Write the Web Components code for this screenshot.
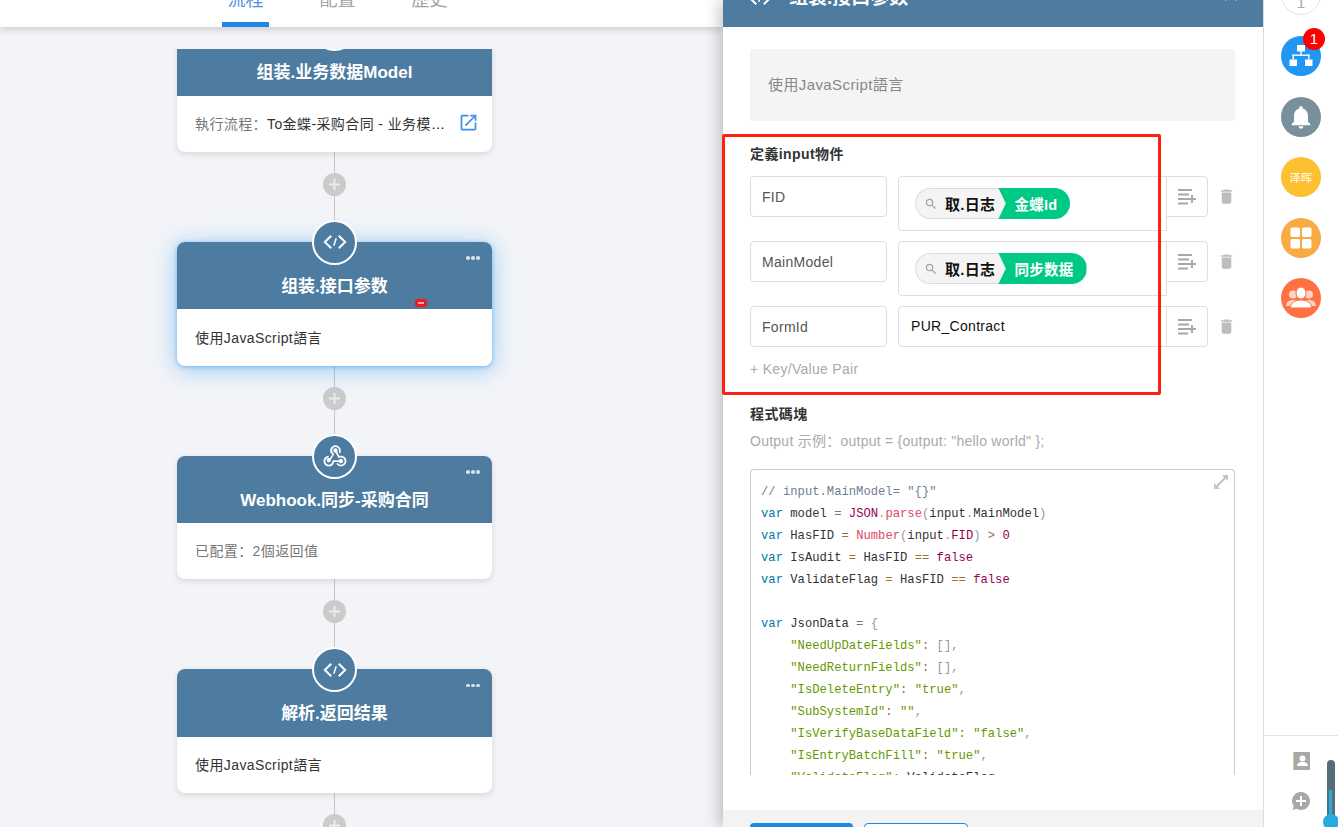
<!DOCTYPE html>
<html lang="zh">
<head>
<meta charset="utf-8">
<title>组装.接口参数</title>
<style>
html,body{margin:0;padding:0;height:827px;overflow:hidden;background:#f3f4f8;font-family:"Liberation Sans","Noto Sans CJK SC",sans-serif}
</style>
</head>
<body>
<x-app>
  <x-topbar slot="top"></x-topbar>
  <x-flow slot="flow">
    <x-flow-card first title-text="组装.业务数据Model" icon="code">
      <span style="color:#777">執行流程&#xFF1A;</span><span style="color:#333">To金蝶-采购合同 - 业务模型数据组装</span>
      <svg slot="action" width="21" height="21" viewBox="0 0 24 24" fill="#3f8fe8"><path d="M19 19H5V5h7V3H5c-1.11 0-2 .9-2 2v14c0 1.1.89 2 2 2h14c1.1 0 2-.9 2-2v-7h-2v7zM14 3v2h3.59l-9.83 9.83 1.41 1.41L19 6.41V10h2V3h-7z"/></svg>
    </x-flow-card>
    <x-connector></x-connector>
    <x-flow-card selected title-text="组装.接口参数" icon="code"><span style="color:#333">使用JavaScript語言</span></x-flow-card>
    <x-connector></x-connector>
    <x-flow-card title-text="Webhook.同步-采购合同" icon="webhook"><span style="color:#777">已配置&#xFF1A;2個返回值</span></x-flow-card>
    <x-connector></x-connector>
    <x-flow-card title-text="解析.返回结果" icon="code"><span style="color:#333">使用JavaScript語言</span></x-flow-card>
    <x-connector></x-connector>
  </x-flow>
  <x-panel slot="panel">
    <x-kv-row key-name="FID"><x-ref-pill source="取.日志" field="金蝶Id"></x-ref-pill></x-kv-row>
    <x-kv-row key-name="MainModel"><x-ref-pill source="取.日志" field="同步数据"></x-ref-pill></x-kv-row>
    <x-kv-row key-name="FormId" plain>PUR_Contract</x-kv-row>
  </x-panel>
  <x-sidebar slot="side"></x-sidebar>
</x-app>

<script>
const CODE_SVG = '<svg width="24" height="24" viewBox="0 0 24 24" fill="none" stroke="#fff" stroke-width="2" stroke-linecap="square"><path d="M7.500 6.500 1.800 12 7.500 17.500M16.500 6.500 22.200 12 16.500 17.500"/><path d="M13 9 11 15" stroke-width="1.500"/></svg>';
const HOOK_SVG = '<svg width="28" height="28" viewBox="0 0 24 24" fill="#fff"><path d="M10.460,19C9,21.070 6.150,21.590 4.090,20.150C2.040,18.710 1.560,15.840 3,13.750C3.870,12.500 5.210,11.830 6.580,11.770L6.630,13.200C5.720,13.270 4.840,13.740 4.270,14.560C3.270,16 3.580,17.940 4.950,18.910C6.330,19.870 8.260,19.500 9.260,18.070C9.570,17.620 9.750,17.130 9.820,16.630V15.620L15.400,15.580L15.470,15.470C16,14.550 17.150,14.230 18.050,14.750C18.950,15.270 19.260,16.430 18.730,17.350C18.200,18.260 17.040,18.580 16.140,18.060C15.730,17.830 15.440,17.460 15.310,17.040L11.240,17.060C11.130,17.730 10.870,18.380 10.460,19M17.740,11.860C20.270,12.170 22.070,14.440 21.760,16.930C21.450,19.430 19.150,21.200 16.620,20.890C15.130,20.710 13.900,19.860 13.190,18.680L14.430,17.960C14.920,18.730 15.750,19.280 16.750,19.410C18.500,19.620 20.050,18.430 20.260,16.760C20.470,15.090 19.230,13.560 17.500,13.350C16.960,13.290 16.440,13.360 15.970,13.530L15.120,13.970L12.540,9.200H12.320C11.260,9.170 10.440,8.290 10.470,7.250C10.500,6.210 11.400,5.400 12.450,5.440C13.500,5.500 14.330,6.370 14.300,7.410C14.280,7.850 14.110,8.250 13.840,8.560L15.730,12.050C16.350,11.850 17.030,11.780 17.740,11.860M8.250,9.140C7.250,6.790 8.310,4.100 10.620,3.120C12.940,2.140 15.620,3.250 16.620,5.600C17.200,6.970 17.070,8.470 16.420,9.670L15.180,8.950C15.590,8.140 15.670,7.150 15.280,6.220C14.620,4.650 12.840,3.900 11.310,4.550C9.780,5.200 9.080,7 9.740,8.560C10,9.200 10.500,9.700 11.030,10L11.420,10.230L8.360,15.250C8.390,15.300 8.430,15.400 8.460,15.500C8.530,16.500 7.780,17.380 6.750,17.440C5.730,17.500 4.840,16.720 4.790,15.680C4.730,14.640 5.500,13.740 6.540,13.680C6.970,13.660 7.380,13.780 7.710,14L9.850,10.500C9.180,10.200 8.580,9.700 8.250,9.140Z"/></svg>';

function shadow(el, html){ el.attachShadow({mode:'open'}).innerHTML = html; }

customElements.define('x-app', class extends HTMLElement{
  constructor(){ super(); shadow(this, `<style>
    :host{display:flex;width:1338px;height:827px;overflow:hidden;background:#f3f4f8}
    .left{width:723px;flex:none;display:flex;flex-direction:column;position:relative}
    ::slotted([slot=top]){position:relative;z-index:1}
    .panelwrap{position:relative;z-index:2;flex:none}
    .sidewrap{position:relative;z-index:3;flex:none}
  </style>
  <div class="left"><slot name="top"></slot><slot name="flow"></slot></div>
  <div class="panelwrap"><slot name="panel"></slot></div>
  <div class="sidewrap"><slot name="side"></slot></div>`); }
});

customElements.define('x-topbar', class extends HTMLElement{
  constructor(){ super(); shadow(this, `<style>
    :host{display:block;height:27px;width:100%;background:#fff;box-shadow:0 2px 8px rgba(0,0,0,.18);overflow:hidden}
    .tabs{display:flex;gap:45px;margin:-33px 0 0 222px;height:60px}
    .t{width:47px;height:60px;box-sizing:border-box;text-align:center;font-size:18px;line-height:26px;padding-top:20px;color:#a3a3a3}
    .a{color:#4a90e2;border-bottom:5px solid #1e88e5}
  </style>
  <div class="tabs"><div class="t a">流程</div><div class="t">配置</div><div class="t">歷史</div></div>`); }
});

customElements.define('x-flow', class extends HTMLElement{
  constructor(){ super(); shadow(this, `<style>
    :host{display:block;margin-top:22px;flex:1;min-height:0;overflow:hidden;padding-left:177px;padding-right:16px}
    .col{width:315px;display:flex;flex-direction:column;margin-top:-20.6px}
  </style><div class="col"><slot></slot></div>`); }
});

customElements.define('x-flow-card', class extends HTMLElement{
  constructor(){ super(); shadow(this, `<style>
    :host{display:block;position:relative;width:315px;height:123.7px;flex:none;border-radius:8px;background:#fff;box-shadow:0 2px 6px rgba(0,0,0,.12)}
    :host([selected]){box-shadow:0 1px 4px rgba(33,150,243,.5),0 3px 22px 2px rgba(33,150,243,.38)}
    .h{height:67.4px;box-sizing:border-box;padding-top:33px;background:#4d7ca0;border-radius:8px 8px 0 0;text-align:center;color:#fff;font-weight:700;font-size:17px;line-height:24px}
    .ic{position:absolute;left:135px;top:-22px;width:45px;height:45px;box-sizing:border-box;border:2px solid #fff;border-radius:50%;background:#4d7ca0;display:flex;align-items:center;justify-content:center}
    .dots{position:absolute;right:12px;top:14.500px;display:flex;gap:1.600px}
    .dots i{width:3.600px;height:3.600px;border-radius:50%;background:#d5e2ec}
    .b{height:56.3px;box-sizing:border-box;padding:0 13.500px 2px 18px;display:flex;align-items:center;gap:9px;font-size:14px;letter-spacing:.4px}
    .txt{flex:1;min-width:0;white-space:nowrap;overflow:hidden;text-overflow:ellipsis}
    .mark{position:absolute;left:238px;top:57.100px;width:12px;height:8px;box-sizing:border-box;border:3px solid #f01818;border-radius:3px;background:#ffb0b0}
    ::slotted(svg){display:block;flex:none}
  </style>
  <div class="h"></div><div class="ic"></div><div class="dots"><i></i><i></i><i></i></div>
  <div class="b"><div class="txt"><slot></slot></div><slot name="action"></slot></div>`); }
  connectedCallback(){
    const r=this.shadowRoot;
    r.querySelector('.h').textContent=this.getAttribute('title-text');
    r.querySelector('.ic').innerHTML=this.getAttribute('icon')==='webhook'?HOOK_SVG:CODE_SVG;
    if(this.hasAttribute('selected')&&!r.querySelector('.mark')){const m=document.createElement('div');m.className='mark';r.appendChild(m);}
  }
});

customElements.define('x-connector', class extends HTMLElement{
  constructor(){ super(); shadow(this, `<style>
    :host{display:flex;flex-direction:column;align-items:center;height:89.9px;flex:none;width:315px}
    .l{width:1px;background:#c6c6c8}
    .p{width:23px;height:23px;flex:none;border-radius:50%;background:#cbcbcb;display:flex;align-items:center;justify-content:center}
  </style><div class="l" style="height:21px"></div>
  <div class="p"><svg width="13" height="13" viewBox="0 0 13 13"><path d="M5.500 1h2v4.500H12v2H7.500V12h-2V7.500H1v-2h4.500z" fill="#ececec"/></svg></div>
  <div class="l" style="height:45.9px"></div>`); }
});

customElements.define('x-ref-pill', class extends HTMLElement{
  constructor(){ super(); shadow(this, `<style>
    :host{display:inline-flex;height:31px;vertical-align:top}
    .s{display:flex;align-items:center;box-sizing:border-box;height:31px;padding:0 11px 0 8px;gap:7px;background:#f4f4f4;border:1px solid #ddd;border-right:0;border-radius:16px 0 0 16px;font-size:15px;font-weight:700;color:#111}
    .f{display:flex;align-items:center;height:31px;box-sizing:border-box;margin-left:-8px;padding:0 13px 0 16px;background:#00c985;color:#fff;font-size:14.500px;font-weight:700;border-radius:0 16px 16px 0;clip-path:polygon(0 0,100% 0,100% 100%,0 100%,7.500px 50%)}
    svg{display:block;flex:none}
  </style>
  <div class="s"><svg width="14" height="14" viewBox="0 0 24 24" fill="#a0a0a0"><path d="M15.500 14h-.79l-.28-.27C15.410 12.590 16 11.110 16 9.500 16 5.910 13.090 3 9.500 3S3 5.910 3 9.500 5.910 16 9.500 16c1.610 0 3.090-.59 4.230-1.570l.27.28v.79l5 4.990L20.490 19l-4.990-5zm-6 0C7.010 14 5 11.990 5 9.500S7.010 5 9.500 5 14 7.010 14 9.500 11.990 14 9.500 14z"/></svg><span class="src"></span></div>
  <div class="f"></div>`); }
  connectedCallback(){
    this.shadowRoot.querySelector('.src').textContent=this.getAttribute('source');
    this.shadowRoot.querySelector('.f').textContent=this.getAttribute('field');
  }
});

customElements.define('x-kv-row', class extends HTMLElement{
  constructor(){ super(); shadow(this, `<style>
    :host{display:flex;align-items:flex-start;font-size:14px;letter-spacing:.3px}
    .k{width:137px;height:41px;box-sizing:border-box;border:1px solid #dedede;border-radius:4px;padding:1px 11px 0;line-height:39px;color:#555;flex:none}
    .v{width:269px;margin-left:11px;box-sizing:border-box;border:1px solid #dedede;border-radius:4px 0 0 4px;padding:11px 16px;flex:none;min-height:41px;font-size:0}
    :host([plain]) .v{height:41px;padding:0 12px;line-height:38px;font-size:14px;color:#111}
    .add{width:42px;height:41px;margin-left:-1px;box-sizing:border-box;border:1px solid #dedede;border-radius:0 4px 4px 0;display:flex;align-items:center;justify-content:center;flex:none;background:#fff}
    .del{width:19px;height:41px;margin-left:9px;display:flex;align-items:center;justify-content:center;flex:none}
  </style>
  <div class="k"></div><div class="v"><slot></slot></div>
  <div class="add"><svg width="18" height="16" viewBox="0 0 18 16" fill="#a8a8a8"><rect width="14" height="2" y="0"/><rect width="11" height="2" y="4.500"/><rect width="10" height="2" y="9"/><rect width="10" height="2" y="13.500"/><path d="M13 6h2v3H18v2h-3v3H13v-3H10V9h3z"/></svg></div>
  <div class="del"><svg width="19" height="19" viewBox="0 0 24 24" fill="#bdbdbd"><path d="M6 19c0 1.100.9 2 2 2h8c1.100 0 2-.9 2-2V7H6v12zM19 4h-3.500l-1-1h-5l-1 1H5v2h14V4z"/></svg></div>`); }
  connectedCallback(){ this.shadowRoot.querySelector('.k').textContent=this.getAttribute('key-name'); }
});

customElements.define('x-code-block', class extends HTMLElement{
  constructor(){ super();
    const S=s=>`<i class="s">${s}</i>`, O=s=>`<i class="o">${s}</i>`, K=s=>`<i class="k">${s}</i>`, P=s=>`<i class="p">${s}</i>`, B=s=>`<i class="b">${s}</i>`, F=s=>`<i class="f">${s}</i>`;
    const lines=[
      `<i class="c">// input.MainModel= "{}"</i>`,
      `${K('var')} model ${O('=')} ${B('JSON')}${P('.')}${F('parse')}${P('(')}input${P('.')}MainModel${P(')')}`,
      `${K('var')} HasFID ${O('=')} ${F('Number')}${P('(')}input${P('.')}${B('FID')}${P(')')} ${O('&gt;')} ${B('0')}`,
      `${K('var')} IsAudit ${O('=')} HasFID ${O('==')} ${B('false')}`,
      `${K('var')} ValidateFlag ${O('=')} HasFID ${O('==')} ${B('false')}`,
      ``,
      `${K('var')} JsonData ${O('=')} ${P('{')}`,
      `    ${S('"NeedUpDateFields"')}${O(':')} ${P('[],')}`,
      `    ${S('"NeedReturnFields"')}${O(':')} ${P('[],')}`,
      `    ${S('"IsDeleteEntry"')}${O(':')} ${S('"true"')}${P(',')}`,
      `    ${S('"SubSystemId"')}${O(':')} ${S('""')}${P(',')}`,
      `    ${S('"IsVerifyBaseDataField"')}${O(':')} ${S('"false"')}${P(',')}`,
      `    ${S('"IsEntryBatchFill"')}${O(':')} ${S('"true"')}${P(',')}`,
      `    ${S('"ValidateFlag"')}${O(':')} ValidateFlag${P(',')}`
    ];
    shadow(this, `<style>
      :host{display:block;position:relative;height:306px;box-sizing:border-box;border:1px solid #ccc;border-bottom:0;border-radius:4px 4px 0 0;overflow:hidden;padding:11px 10px 0}
      pre{margin:0;font-family:"Liberation Mono",monospace;font-size:12.200px;line-height:22px;color:#333}
      i{font-style:normal}
      .c{color:#708090}.k{color:#07a}.o{color:#9a6e3a}.p{color:#999}.b{color:#905}.f{color:#dd4a68}.s{color:#690}
      svg{position:absolute;right:6px;top:5px}
    </style>
    <pre>${lines.join('\n')}</pre>
    <svg width="14" height="14" viewBox="0 0 14 14" fill="#c4c4c4"><path d="M8 0h6v6l-2.200-2.200L3.800 11.800 6 14H0V8l2.200 2.200 8-8z"/></svg>`); }
});

customElements.define('x-panel', class extends HTMLElement{
  constructor(){ super(); shadow(this, `<style>
    :host{display:flex;flex-direction:column;width:540px;height:827px;background:#fff;box-shadow:-4px 0 14px rgba(0,0,0,.22);position:relative}
    .head{height:27px;flex:none;background:#4d7ca0;overflow:hidden;position:relative;color:#fff}
    .head .in{position:absolute;left:25px;right:25px;bottom:17px;height:24px;display:flex;align-items:center;font-size:19px;font-weight:700;line-height:24px;white-space:nowrap}
    .head .in span{margin-left:17px}
    .head .x{margin-left:auto;display:block;transform:translateY(-4px)}
    .main{flex:1;min-height:0;padding:22px 28px 0 27px;overflow:hidden}
    .desc{height:72px;box-sizing:border-box;background:#f4f4f4;border-radius:3px;padding:0 18px;font-size:15px;line-height:72px;color:#888;letter-spacing:.4px}
    .lab{font-size:14px;font-weight:700;line-height:20px;color:#333;letter-spacing:.4px}
    .rows{display:flex;flex-direction:column;gap:10px;margin-top:12px}
    .more{margin-top:12px;font-size:14px;line-height:20px;color:#aaa;letter-spacing:.3px}
    .hint{margin-top:7px;font-size:14px;line-height:20px;color:#aaa;letter-spacing:.25px}
    x-code-block{margin-top:18px}
    .foot{height:17px;flex:none;background:#f3f3f3;padding:13px 28px 0 27px;box-sizing:border-box;display:flex;gap:11px;overflow:hidden}
    .btn{width:103px;height:36px;flex:none;border-radius:4px;background:#1e88e5;box-sizing:border-box}
    .btn2{width:104px;background:#fff;border:1px solid #1e88e5;font-size:14px}
    .red{position:absolute;left:-1px;top:134px;width:439px;height:261px;box-sizing:border-box;border:3px solid #ff2015;border-radius:2px;pointer-events:none}
  </style>
  <div class="head"><div class="in">${CODE_SVG}<span>组装.接口参数</span><svg class="x" width="14" height="14" viewBox="0 0 14 14" fill="none" stroke="#fff" stroke-width="2"><path d="M1 1l12 12M13 1 1 13"/></svg></div></div>
  <div class="main">
    <div class="desc">使用JavaScript語言</div>
    <div class="lab" style="margin-top:23px">定義input物件</div>
    <div class="rows"><slot></slot></div>
    <div class="more">+ Key/Value Pair</div>
    <div class="lab" style="margin-top:25px">程式碼塊</div>
    <div class="hint">Output 示例&#xFF1A;output = {output: "hello world" };</div>
    <x-code-block></x-code-block>
  </div>
  <div class="foot"><div class="btn"></div><div class="btn btn2"></div></div>
  <div class="red"></div>`); }
});

customElements.define('x-avatar', class extends HTMLElement{
  constructor(){ super(); shadow(this, `<style>
    :host{display:flex;position:relative;width:40px;height:40px;flex:none;box-sizing:border-box;border-radius:50%;align-items:center;justify-content:center;color:#fff;font-size:12px;background:var(--bg,#ccc);border:var(--bd,0)}
    .n{position:absolute;right:-4px;top:-8px;width:22px;height:22px;border-radius:50%;background:#f00;color:#fff;font-size:15px;line-height:22px;text-align:center}
  </style><slot></slot>`); }
  connectedCallback(){
    if(this.hasAttribute('badge')&&!this.shadowRoot.querySelector('.n')){const b=document.createElement('div');b.className='n';b.textContent=this.getAttribute('badge');this.shadowRoot.appendChild(b);}
  }
});

customElements.define('x-sidebar', class extends HTMLElement{
  constructor(){ super(); shadow(this, `<style>
    :host{display:flex;flex-direction:column;width:75px;height:827px;box-sizing:border-box;background:#fff;border-left:1px solid #ddd;position:relative;overflow:hidden}
    .top{display:flex;flex-direction:column;align-items:center;gap:20.600px;margin-top:-24.600px;width:74px}
    .bot{margin-top:auto;height:92px;box-sizing:border-box;border-top:1px solid #e2e2e2;display:flex;flex-direction:column;align-items:center;padding-top:16px;gap:21px;width:74px}
    svg{display:block}
    .therm{position:absolute;left:62.500px;top:760px;width:8px;height:60px;background:#546e7a;border-radius:4px 4px 0 0}
    .fill{position:absolute;left:2.500px;top:30px;width:3px;height:30px;background:#29a9e0}
    .bulb{position:absolute;left:-4px;top:54px;width:16px;height:16px;border-radius:50%;background:#29a9e0}
  </style>
  <div class="top">
    <x-avatar style="--bg:#fff;--bd:1px solid #e4e4e4;color:#9aa;font-size:15px;align-items:flex-end;padding-bottom:3px">1</x-avatar>
    <x-avatar style="--bg:#2196f3" badge="1"><svg width="26" height="24" viewBox="0 0 26 24" fill="#fff"><rect x="9" y="1" width="8" height="6.500"/><rect x="12.300" y="7" width="1.400" height="5"/><rect x="4.500" y="10.500" width="17" height="1.400"/><rect x="4.500" y="10.500" width="1.400" height="5"/><rect x="20.100" y="10.500" width="1.400" height="5"/><rect x="1.500" y="15.500" width="7.500" height="6.500"/><rect x="17" y="15.500" width="7.500" height="6.500"/></svg></x-avatar>
    <x-avatar style="--bg:#78909c"><svg width="28" height="28" viewBox="0 0 24 24" fill="#fff"><path d="M12 22c1.100 0 2-.9 2-2h-4c0 1.100.9 2 2 2zm6-6v-5c0-3.070-1.630-5.640-4.500-6.320V4c0-.83-.67-1.500-1.500-1.500s-1.500.67-1.500 1.500v.68C7.640 5.360 6 7.920 6 11v5l-2 2v1h16v-1l-2-2z"/></svg></x-avatar>
    <x-avatar style="--bg:#fdc030;font-size:11.500px">泽晖</x-avatar>
    <x-avatar style="--bg:#f7ab42"><svg width="22" height="22" viewBox="0 0 22 22" fill="#fff"><rect x="0.500" y="0.500" width="9.500" height="9.500" rx="1.500"/><rect x="12" y="0.500" width="9.500" height="9.500" rx="1.500"/><rect x="0.500" y="12" width="9.500" height="9.500" rx="1.500"/><rect x="12" y="12" width="9.500" height="9.500" rx="1.500"/></svg></x-avatar>
    <x-avatar style="--bg:#ff7043"><svg width="32" height="24" viewBox="0 0 32 24"><g fill="#ffd2c2"><circle cx="8" cy="8.500" r="4"/><circle cx="24" cy="8.500" r="4"/><path d="M1 20c0-4 3-6 7-6s7 2 7 6zM17 20c0-4 3-6 7-6s7 2 7 6z"/></g><g fill="#fff" stroke="#ff7043" stroke-width="1"><ellipse cx="16" cy="7" rx="5" ry="6"/><path d="M5.500 22c0-5 4-8 10.500-8s10.500 3 10.500 8z"/></g></svg></x-avatar>
  </div>
  <div class="bot">
    <svg width="17" height="18" viewBox="0 0 17 18"><rect width="17" height="18" rx="1" fill="#a8a8a8"/><rect width="1.200" height="18" fill="#d4c5a4"/><circle cx="9.500" cy="6.500" r="3" fill="#fff"/><path d="M4 14c0-3 2.500-4 5.500-4s5.500 1 5.500 4z" fill="#fff"/></svg>
    <svg width="20" height="20" viewBox="0 0 20 20"><path d="M10 1a9 9 0 1 1-4.500 16.800L1.500 19l1.300-3.700A9 9 0 0 1 10 1z" fill="#a8a8a8"/><path d="M9 5h2v4h4v2h-4v4H9v-4H5V9h4z" fill="#fff"/></svg>
  </div>
  <div class="therm"><div class="fill"></div><div class="bulb"></div></div>`); }
});
</script>
</body>
</html>
